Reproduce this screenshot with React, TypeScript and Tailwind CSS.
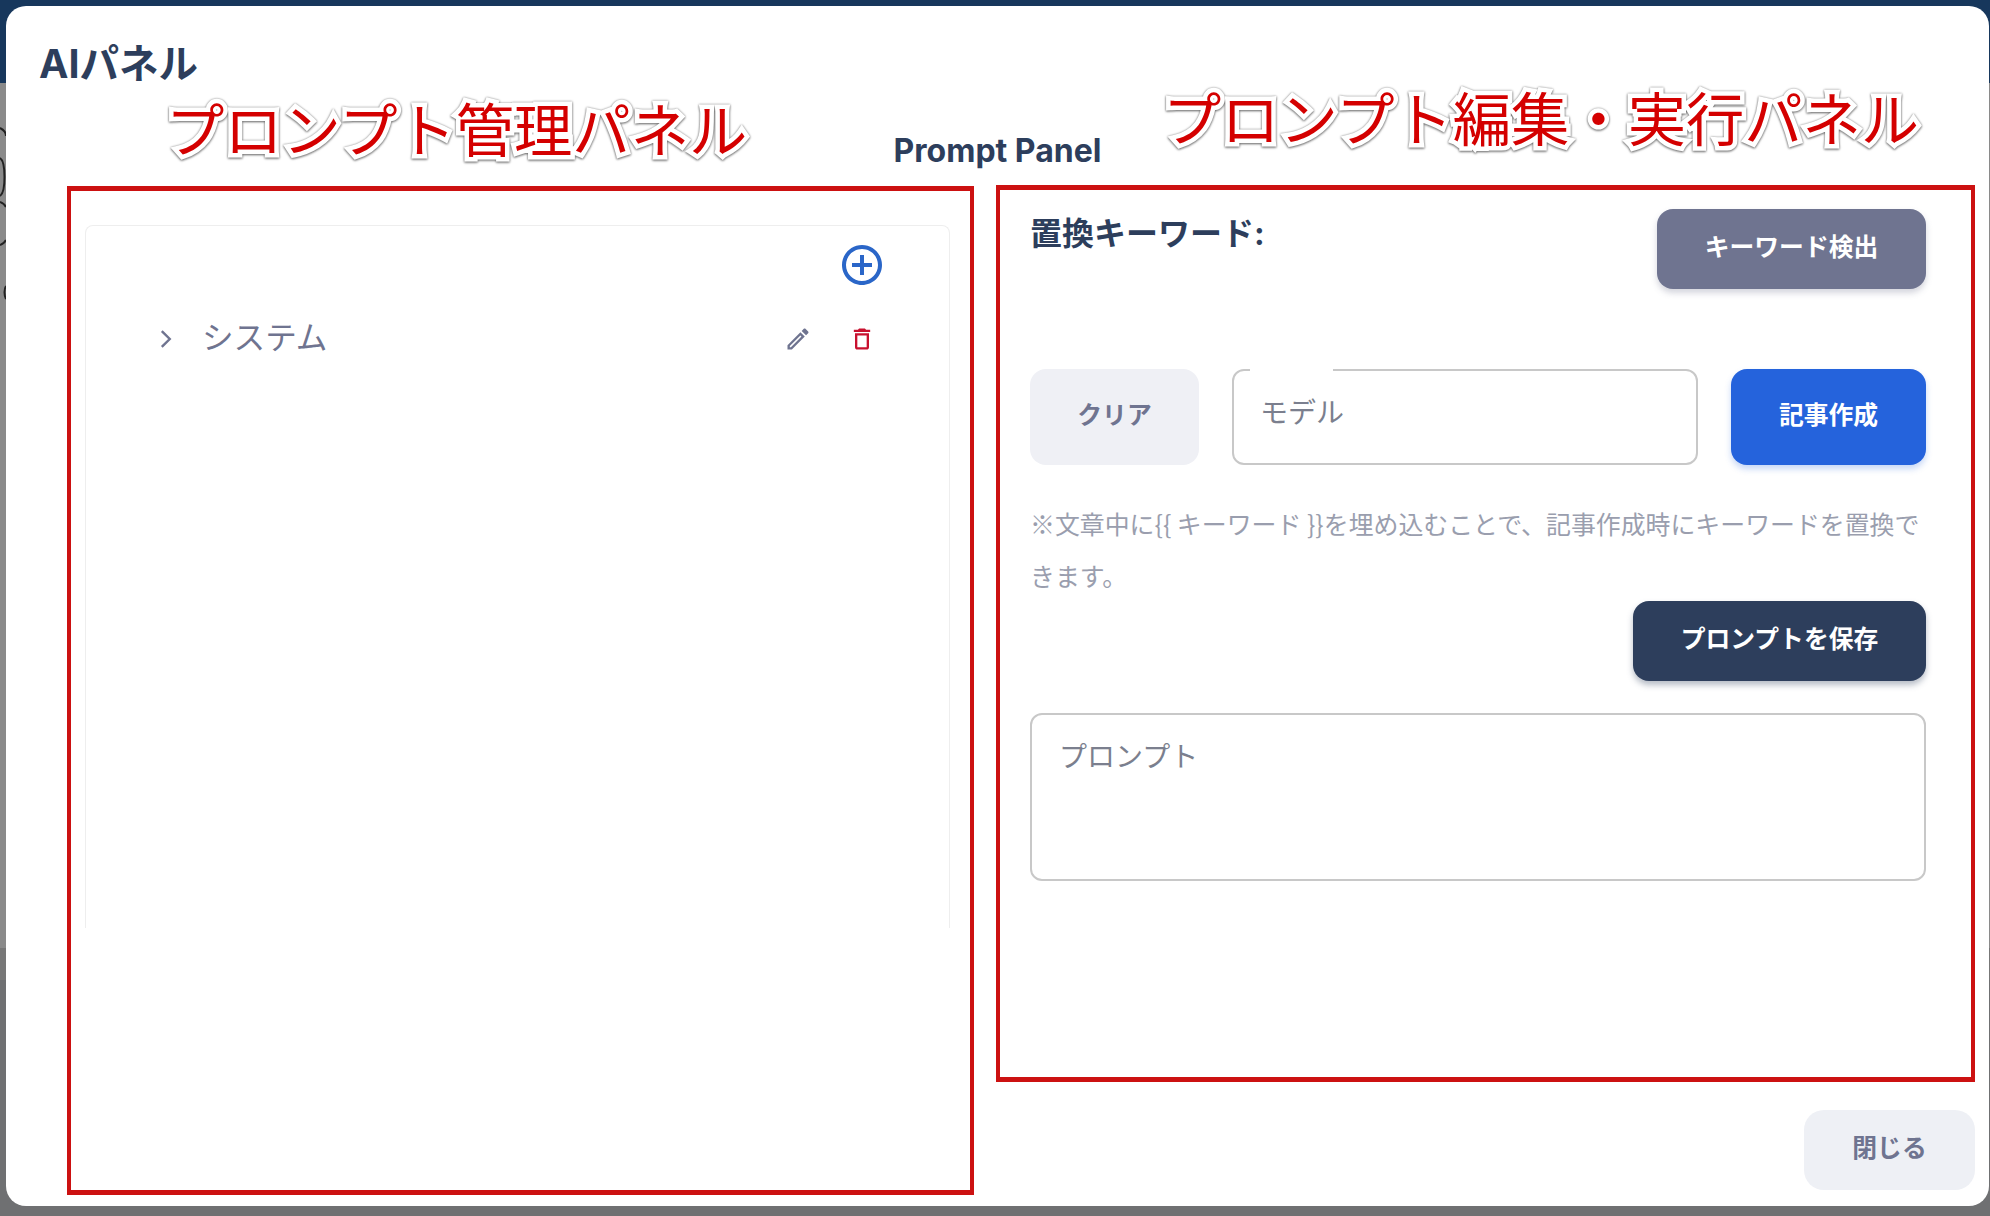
const sans = "font-['Inter','Noto_Sans_CJK_JP',sans-serif]";

const addPath = "M13 7h-2v4H7v2h4v4h2v-4h4v-2h-4V7zm-1-5C6.48 2 2 6.48 2 12s4.48 10 10 10 10-4.48 10-10S17.52 2 12 2zm0 18c-4.41 0-8-3.59-8-8s3.59-8 8-8 8 3.59 8 8-3.59 8-8 8z";
const editPath = "M14.06 9.02l.92.92L5.92 19H5v-.92l9.06-9.06M17.66 3c-.25 0-.51.1-.7.29l-1.83 1.83 3.75 3.75 1.83-1.83c.39-.39.39-1.02 0-1.41l-2.34-2.34c-.2-.2-.45-.29-.71-.29zm-3.6 3.19L3 17.25V21h3.75L17.81 9.94l-3.75-3.75z";
const trashPath = "M6 19c0 1.1.9 2 2 2h8c1.1 0 2-.9 2-2V7H6v12zM8 9h8v10H8V9zm7.5-5l-1-1h-5l-1 1H5v2h14V4z";

const Icon = ({ d, className }: { d: string; className: string }) => (
  <svg viewBox="0 0 24 24" fill="currentColor" className={className}>
    <path d={d} />
  </svg>
);

const Backdrop = () => (
  <div className="absolute inset-0 bg-[#6f7072]">
    <div className="h-[83px] bg-[#17375c]" />
    <div className="h-[865px] bg-[#8a8a8a]" />
    <div className="h-[32px] bg-[#777777]" />
    <svg width="8" height="240" viewBox="0 0 8 240" fill="none" stroke="#222222" strokeWidth="2" className="absolute left-0 top-[120px]">
      <path d="M0 8c4 2 6 5 6 8" />
      <path d="M0 38c6 4 6 34 0 38" />
      <path d="M0 82c3 1 5 3 6 5" />
      <path d="M0 125c3-1 5-3 6-5" />
      <path d="M6 166c-2 3-2 9 0 13" />
    </svg>
  </div>
);

export default function App() {
  return (
    <div className={`relative h-[1216px] w-[1990px] overflow-hidden ${sans}`}>
      <Backdrop />

      <div className="relative ml-[6px] flex h-[1200px] w-[1983px] translate-y-[6px] flex-col rounded-[20px] bg-white text-[#2d3e5c]">
        <h2 className="ml-[33px] mt-[36px] text-[39.5px] font-bold leading-[44px]">AIパネル</h2>
        <h3 className="mt-[47px] text-center text-[32px] font-bold leading-[36px]">Prompt Panel</h3>

        <div className="mt-[17px] flex gap-[22px] pl-[61px]">
          {/* left: prompt tree */}
          <div className="box-border h-[1009px] w-[907px] border-x-4 border-y-[5px] border-[#cc1111] pl-[14px] pr-[20px] pt-[34px]">
            <div className="h-[703px] rounded-t-lg border border-b-0 border-[#eeeeee] pr-[63px] pt-[15px]">
              <div className="flex justify-end">
                <Icon d={addPath} className="h-12 w-12 text-[#2a66c8]" />
              </div>
              <div className="mt-[26px] flex h-12 items-center pl-[63px]">
                <svg viewBox="0 0 24 24" fill="none" stroke="#6f7490" strokeWidth="1.6" className="h-9 w-9 -ml-[1px]">
                  <path d="M9.2 6.7l5.3 5.3-5.3 5.3" />
                </svg>
                <span className="ml-[18px] -mt-[2px] flex-1 text-[31.6px] font-normal text-[#6f7490]">システム</span>
                <Icon d={editPath} className="mr-[36px] h-7 w-7 text-[#6f7490]" />
                <Icon d={trashPath} className="mr-[10px] h-7 w-7 text-[#c8102e]" />
              </div>
            </div>
          </div>

          {/* right: prompt editor */}
          <div className="relative -mt-[1px] w-[979px]">
            <div className="box-border h-[897px] border-x-4 border-y-[5px] border-[#cc1111] pl-[30px] pr-[45px] pt-[19px]">
              <div className="flex items-start justify-between">
                <span className="mt-[6px] text-[32px] font-bold leading-[38px]">置換キーワード:</span>
                <button className="h-20 w-[269px] rounded-2xl bg-[#6f7490] pb-[2px] text-[24.8px] font-bold text-white shadow-[0_4px_6px_rgba(111,116,144,0.3)]">キーワード検出</button>
              </div>

              <div className="mt-[80px] flex h-[96px] gap-[33px]">
                <button className="w-[169px] rounded-2xl bg-[#eff0f5] pb-[2px] text-[24.8px] font-bold text-[#6f7490]">クリア</button>
                <div className="relative flex flex-1 items-start rounded-xl border-2 border-[#c8c8c8] pl-[26px] pt-[22px]">
                  <span className="absolute -top-[2px] left-[16px] h-[2px] w-[83px] bg-white" />
                  <span className="text-[28px] leading-[40px] text-[#7b7f8e]">モデル</span>
                </div>
                <button className="w-[195px] rounded-2xl bg-[#2563dc] pb-[2px] text-[24.8px] font-bold text-white shadow-[0_4px_6px_rgba(37,99,220,0.25)]">記事作成</button>
              </div>

              <p className="mt-[32px] font-['Noto_Sans_CJK_JP',sans-serif] text-[24.9px] leading-[52px] text-[#9a9eae]">※文章中に{"{{ キーワード }}"}を埋め込むことで、記事作成時にキーワードを置換できます。</p>

              <div className="flex justify-end">
                <button className="h-20 w-[293px] rounded-2xl bg-[#2d3e5c] pb-[2px] text-[24.8px] font-bold text-white shadow-[0_4px_6px_rgba(45,62,92,0.35)]">プロンプトを保存</button>
              </div>

              <div className="mt-[32px] h-[168px] rounded-xl border-2 border-[#c8c8c8] pl-[27px] pt-[22px]">
                <span className="text-[28px] leading-[40px] text-[#7b7f8e]">プロンプト</span>
              </div>
            </div>
            <div className="mt-[28px] flex justify-end">
              <button className="h-20 w-[171px] rounded-[20px] bg-[#eef0f5] pb-[2px] text-[24.8px] font-bold text-[#6f7490]">閉じる</button>
            </div>
          </div>
        </div>

        {/* red annotations laid over the screenshot */}
        <span className="absolute left-[160px] top-[90px] text-[58.3px] font-normal leading-[70px] text-[#d40000] [-webkit-text-stroke:9px_white] [paint-order:stroke_fill] [filter:drop-shadow(0_1px_1px_rgba(0,0,0,0.45))_drop-shadow(0_0_1px_rgba(0,0,0,0.35))]">プロンプト管理パネル</span>
        <span className="absolute left-[1157px] top-[79px] text-[58.3px] font-normal leading-[70px] text-[#d40000] [-webkit-text-stroke:9px_white] [paint-order:stroke_fill] [filter:drop-shadow(0_1px_1px_rgba(0,0,0,0.45))_drop-shadow(0_0_1px_rgba(0,0,0,0.35))]">プロンプト編集・実行パネル</span>
      </div>
    </div>
  );
}
